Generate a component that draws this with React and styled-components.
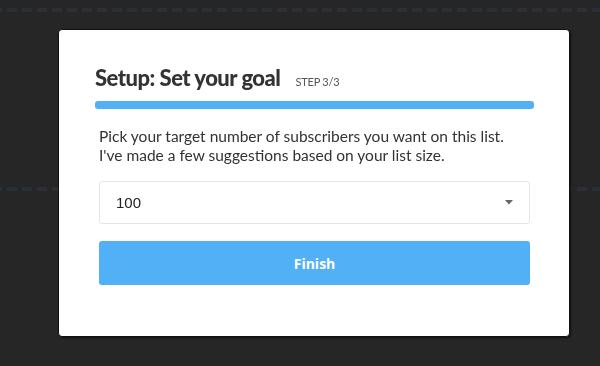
import styled, { createGlobalStyle } from 'styled-components';

const GlobalStyle = createGlobalStyle`
  html, body {
    margin: 0;
    padding: 0;
    background: #262626;
  }
  body {
    font-family: Lato, "Open Sans", sans-serif;
  }
`

const Page = styled.div`
  height: 366px;
  padding-top: 8px;
  box-sizing: border-box;
  display: flex;
  flex-direction: column;
  gap: 175px;
  overflow: hidden;
`

const Dashes = styled.div`
  height: 4px;
  width: 100%;
  background: repeating-linear-gradient(to right, #2b3036 0 10px, transparent 10px 15px);
  background-position: 7px 0;
`

const Overlay = styled.div`
  position: fixed;
  inset: 0;
  display: flex;
  align-items: flex-start;
  padding: 29px 0 0 58px;
`

const Modal = styled.section`
  width: 512px;
  height: 308px;
  box-sizing: border-box;
  background: #fff;
  border: 1px solid #111;
  border-radius: 4px;
  box-shadow: 1px 1px 2px rgba(0, 0, 0, 0.6);
  padding: 35px 35px 0 36px;
  display: flex;
  flex-direction: column;
`

const Header = styled.div`
  display: flex;
  align-items: baseline;
  height: 26px;
  line-height: 26px;
`

const Title = styled.h2`
  margin: 0;
  font-family: Lato, sans-serif;
  font-size: 22px;
  font-weight: 900;
  letter-spacing: -0.5px;
  color: #333;
`

const Step = styled.span`
  margin-left: 15px;
  font-family: Lato, sans-serif;
  font-size: 11px;
  letter-spacing: -0.2px;
  color: #555;
  text-transform: uppercase;
`

const Progress = styled.div`
  margin-top: 10px;
  height: 8px;
  border-radius: 3px;
  background: #52b0f5;
  width: ${p => p.$value}%;
`

const Body = styled.div`
  padding: 0 4px;
  display: flex;
  flex-direction: column;
`

const Text = styled.p`
  margin: 18px 0 0;
  font-family: Lato, sans-serif;
  font-size: 15.5px;
  line-height: 19px;
  color: #333;
`

const Select = styled.div`
  margin-top: 16px;
  height: 43px;
  box-sizing: border-box;
  border: 1px solid #e4e4e4;
  border-radius: 3px;
  display: flex;
  align-items: center;
  justify-content: space-between;
  padding: 0 16px 0 16px;
  font-family: "Liberation Sans", Arial, sans-serif;
  font-size: 15px;
  color: #222;
`

const Button = styled.button`
  margin-top: 17px;
  height: 44px;
  border: none;
  border-radius: 3px;
  background: #52b1f6;
  color: #fff;
  font-family: "Open Sans", sans-serif;
  font-size: 14px;
  font-weight: 700;
  cursor: pointer;
`

function Caret() {
  return (
    <svg width="8" height="5" viewBox="0 0 8 5">
      <polygon points="0,0 8,0 4,4.5" fill="#666" />
    </svg>
  )
}

export default function App() {
  return (
    <>
      <GlobalStyle />
      <Page>
        <Dashes />
        <Dashes />
      </Page>
      <Overlay>
        <Modal>
          <Header>
            <Title>Setup: Set your goal</Title>
            <Step>Step 3/3</Step>
          </Header>
          <Progress $value={100} />
          <Body>
            <Text>
              Pick your target number of subscribers you want on this list.<br />
              I've made a few suggestions based on your list size.
            </Text>
            <Select>
              <span>100</span>
              <Caret />
            </Select>
            <Button>Finish</Button>
          </Body>
        </Modal>
      </Overlay>
    </>
  )
}
